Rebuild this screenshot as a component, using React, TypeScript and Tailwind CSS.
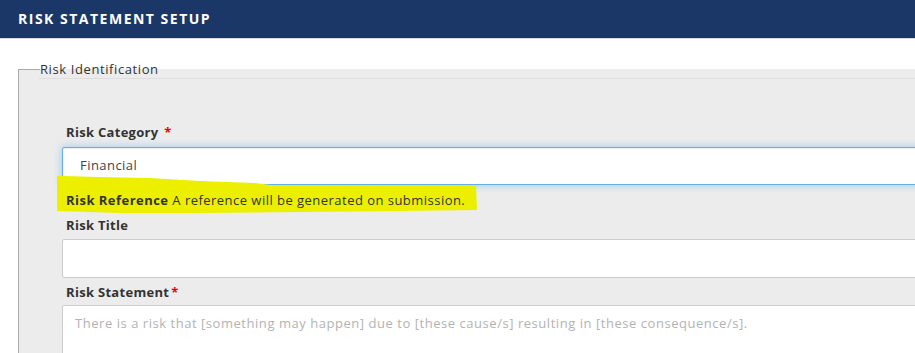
import React from "react";

export default function App() {
  return (
    <div
      className="relative w-[915px] h-[353px] overflow-hidden bg-white text-[#333]"
      style={{ fontFamily: '"Open Sans", "DejaVu Sans", sans-serif' }}
    >
      <div className="h-[39px] bg-[#1b3768] border-b border-[#d9d9d9] flex items-center pl-[18px]">
        <h1 className="text-white font-bold text-[14px] tracking-[1.5px] uppercase leading-none">
          Risk Statement Setup
        </h1>
      </div>

      <section className="mt-[30px] ml-[18px] w-[1000px] border-l border-[#aaa] bg-[#ececec] pl-[20px]">
        <div className="h-0 flex items-center -ml-[20px]">
          <span className="w-[21px] h-px bg-[#aaa]" />
          <span className="text-[13px] leading-[16px] text-[#333] tracking-[0.6px]">
            Risk Identification
          </span>
        </div>
        <div className="mt-[9px] border-t border-[#dedede] pl-[23px] pt-[45px] h-[400px]">
          <label className="block text-[13px] leading-[16px] font-bold pl-[4px] tracking-[0.3px]">
            Risk Category <span className="text-[#e00] ml-[2px]">*</span>
          </label>
          <div className="mt-[7px] h-[38px] bg-white border border-[#66afe9] rounded-[2px] shadow-[inset_0_1px_1px_rgba(0,0,0,0.075),0_0_8px_rgba(102,175,233,0.6)] flex items-center pl-[17px] text-[13px] tracking-[0.45px] text-[#444]">
            Financial
          </div>
          <div className="mt-[7px] h-[16px]" />
          <label className="block mt-[9px] text-[13px] leading-[16px] font-bold pl-[4px] tracking-[0.3px]">
            Risk Title
          </label>
          <div className="mt-[6px] h-[39px] bg-white border border-[#ccc] rounded-[2px]" />
          <label className="block mt-[6px] text-[13px] leading-[16px] font-bold pl-[4px] tracking-[0.3px]">
            Risk Statement<span className="text-[#e00] ml-[2px]">*</span>
          </label>
          <div className="mt-[5px] h-[80px] bg-white border border-[#ccc] rounded-[2px] pl-[12px] pt-[9px] text-[13px] leading-[16px] tracking-[0.54px] text-[#b3b3b3]">
            There is a risk that [something may happen] due to [these cause/s] resulting in [these consequence/s].
          </div>
        </div>
      </section>

      <svg
        className="absolute left-0 top-0 pointer-events-none"
        width="915"
        height="353"
        viewBox="0 0 915 353"
      >
        <polygon
          fill="#ecf000"
          points="57,176 64,176 100,177 150,178 200,181 255,183 270,185 476,185 477,210 400,211 300,212 200,213 120,213 57,211"
        />
      </svg>
      <div className="absolute left-[66px] top-[192px] text-[13px] leading-[16px] tracking-[0.47px] text-[#333] pointer-events-none whitespace-nowrap">
        <span className="font-bold">Risk Reference</span> A reference will be generated on submission.
      </div>
    </div>
  );
}
